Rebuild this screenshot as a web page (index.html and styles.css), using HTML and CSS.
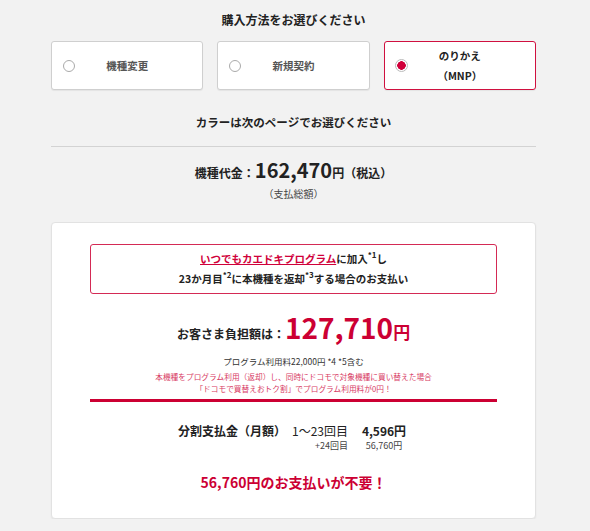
FILE: index.html
```html
<!DOCTYPE html>
<html lang="ja">
<head>
    <meta charset="UTF-8">
    <meta name="viewport" content="width=device-width, initial-scale=1.0">
    <title>購入方法</title>
    <link rel="stylesheet" href="styles.css">
</head>
<body>
    <div class="page">
        <h2 class="title">購入方法をお選びください</h2>

        <div class="options">
            <label class="option">
                <span class="radio"></span>
                <span class="option-text">機種変更</span>
            </label>
            <label class="option">
                <span class="radio"></span>
                <span class="option-text">新規契約</span>
            </label>
            <label class="option selected">
                <span class="radio"></span>
                <span class="option-text">のりかえ<br>（MNP）</span>
            </label>
        </div>

        <p class="color-note">カラーは次のページでお選びください</p>
        <div class="divider"></div>

        <p class="price">機種代金：<span class="price-num">162,470</span>円（税込）</p>
        <p class="price-sub">（支払総額）</p>

        <div class="card">
            <div class="program-box">
                <a href="#" class="program-link">いつでもカエドキプログラム</a>に加入<sup>*1</sup>し<br>
                23か月目<sup>*2</sup>に本機種を返却<sup>*3</sup>する場合のお支払い
            </div>

            <p class="burden">お客さま負担額は：<span class="burden-num">127,710</span><span class="burden-yen">円</span></p>
            <p class="fee">プログラム利用料22,000円 *4 *5含む</p>
            <p class="fee-note">本機種をプログラム利用（返却）し、同時にドコモで対象機種に買い替えた場合<br>「ドコモで買替えおトク割」でプログラム利用料が0円！</p>
            <div class="red-bar"></div>

            <div class="installment">
                <span class="inst-label">分割支払金（月額）</span>
                <span class="inst-count">1〜23回目</span>
                <span class="inst-amount">4,596円</span>
                <span class="inst-sub-count">+24回目</span>
                <span class="inst-sub-amount">56,760円</span>
            </div>

            <p class="no-pay">56,760円のお支払いが不要！</p>
        </div>
    </div>
</body>
</html>
```

FILE: styles.css
```css
body {
    margin: 0;
    padding: 0;
    background-color: #f2f2f2;
    font-family: "Noto Sans CJK JP", "Noto Sans", sans-serif;
    color: #222;
}

p {
    margin: 0;
}

.page {
    width: 485px;
    margin-left: 51px;
    padding-top: 12px;
    text-align: center;
}

.title {
    margin: 0;
    font-size: 12px;
    line-height: 16px;
    font-weight: bold;
}

.options {
    display: grid;
    grid-template-columns: repeat(3, 1fr);
    gap: 14px;
    margin-top: 13px;
}

.option {
    display: grid;
    grid-template-columns: 36px 1fr 36px;
    align-items: center;
    height: 49px;
    box-sizing: border-box;
    background: #fff;
    border: 1px solid #cfcfcf;
    border-radius: 3px;
    box-shadow: 0 1px 1px rgba(0, 0, 0, 0.06);
}

.radio {
    margin-left: 11px;
    width: 12px;
    height: 12px;
    box-sizing: border-box;
    border: 1px solid #aaa;
    border-radius: 50%;
    background: #fff;
}

.option-text {
    font-size: 10.5px;
    line-height: 20px;
    color: #555;
    font-weight: bold;
}

.option.selected {
    border: 1.5px solid #d0103f;
}

.option.selected .radio {
    margin-left: 10.5px;
    width: 13px;
    height: 13px;
    border-color: #bbb;
    background: radial-gradient(circle, #d0003a 0 4px, #fff 4.5px);
}

.option.selected .option-text {
    color: #222;
}

.color-note {
    margin-top: 24px;
    font-size: 11.5px;
    line-height: 16px;
    font-weight: bold;
}

.divider {
    margin-top: 16px;
    height: 1px;
    background: #d3d3d3;
}

.price {
    margin-top: 13px;
    font-size: 12px;
    line-height: 26px;
    font-weight: bold;
}

.price-num {
    font-size: 20px;
    line-height: 1;
}

.price-sub {
    margin-top: 1px;
    font-size: 10px;
    line-height: 14px;
    color: #444;
}

.card {
    margin-top: 21px;
    padding: 21px 38px 25px;
    background: #fff;
    border: 1px solid #e2e2e2;
    border-radius: 4px;
    box-shadow: 0 1px 2px rgba(0, 0, 0, 0.06);
}

.program-box {
    padding: 4px 0;
    border: 1.5px solid #d42a55;
    border-radius: 3px;
    font-size: 10.5px;
    line-height: 20px;
    font-weight: bold;
}

.program-link {
    color: #d0003a;
}

sup {
    font-size: 8px;
    line-height: 0;
    vertical-align: 5px;
}

.burden {
    margin-top: 19px;
    font-size: 12px;
    line-height: 36px;
    font-weight: bold;
}

.burden-num {
    font-size: 28px;
    line-height: 1;
    color: #cc0033;
}

.burden-yen {
    font-size: 17px;
    line-height: 1;
    color: #cc0033;
}

.fee {
    margin-top: 2px;
    font-size: 8.5px;
    line-height: 14px;
    color: #333;
}

.fee-note {
    margin-top: 3px;
    font-size: 7.7px;
    line-height: 12px;
    color: #d83b64;
}

.red-bar {
    margin-top: 4px;
    height: 3px;
    background: #cc0033;
}

.installment {
    display: grid;
    grid-template-columns: auto auto 50px;
    column-gap: 6px;
    justify-content: center;
    margin-top: 21px;
    font-size: 12px;
    line-height: 16px;
}

.inst-label {
    font-weight: bold;
    text-align: left;
}

.inst-count {
    text-align: right;
    margin-right: 5px;
}

.inst-amount {
    font-weight: bold;
}

.inst-sub-count {
    grid-column: 2;
    text-align: right;
    margin-right: 5px;
    font-size: 9px;
    line-height: 13px;
    color: #444;
}

.inst-sub-amount {
    font-size: 9px;
    line-height: 13px;
    color: #444;
}

.no-pay {
    margin-top: 19px;
    font-size: 14px;
    line-height: 22px;
    font-weight: bold;
    color: #cc0033;
}
```
